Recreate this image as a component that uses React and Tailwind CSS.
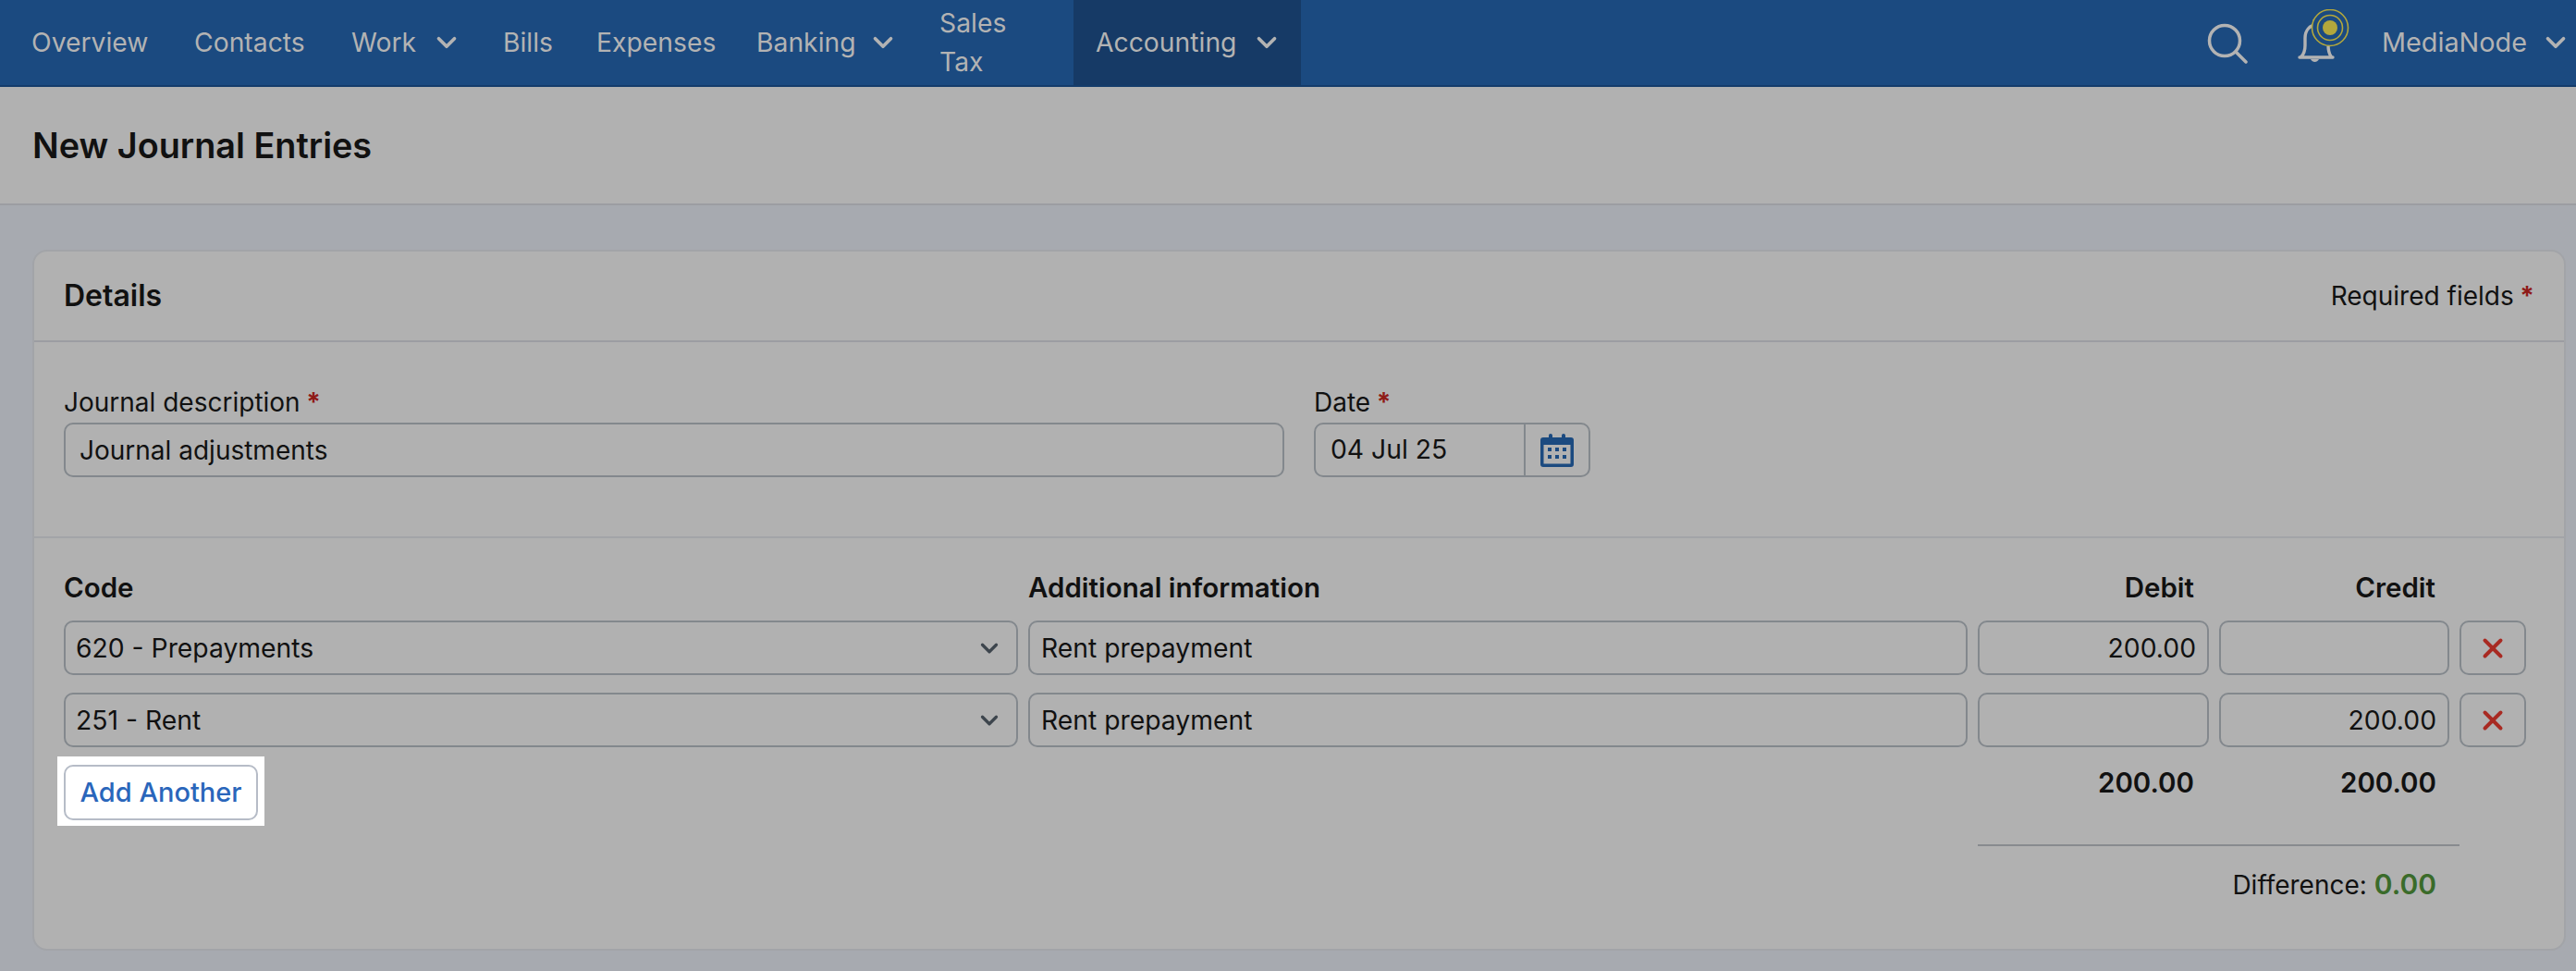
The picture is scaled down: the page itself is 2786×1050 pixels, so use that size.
import React from 'react';
import { ChevronDown, X } from 'lucide-react';

const navItems = [
  { label: 'Overview', width: 'w-[176px]' },
  { label: 'Contacts', width: 'w-[170px]' },
  { label: 'Work', width: 'w-[164px]', menu: true },
  { label: 'Bills', width: 'w-[101px]' },
  { label: 'Expenses', width: 'w-[173px]' },
  { label: 'Banking', width: 'w-[198px]', menu: true },
  { label: 'Sales Tax', width: 'w-[169px]' },
  { label: 'Accounting', width: 'w-[246px]', menu: true, active: true },
];

const rows = [
  { code: '620 - Prepayments', info: 'Rent prepayment', debit: '200.00', credit: '' },
  { code: '251 - Rent', info: 'Rent prepayment', debit: '', credit: '200.00' },
];

const field = 'h-[59px] border-2 border-[#83888d] rounded-[10px] flex items-center';
const tableCols = 'grid grid-cols-[1032px_1016px_250px_249px_72px] gap-x-[11px]';

const SearchIcon = () => (
  <svg width="44" height="44" viewBox="0 0 44 44" fill="none" stroke="#b3b3b3" strokeWidth="3.5" strokeLinecap="round">
    <circle cx="19" cy="19" r="16.5" />
    <path d="M31 31l11 11" />
  </svg>
);

// Notification bell with the yellow "ping" rings over its top right corner
const Bell = () => (
  <svg width="60" height="60" viewBox="0 0 60 60" fill="none">
    <path d="M5 52h36M7 51c3-3 4-6 4-12v-8c0-8 5-14 12-14s13 6 13 14v8c0 6 1 9 3 12M21 12v5" stroke="#b3b3b3" strokeWidth="3.4" strokeLinecap="round" />
    <path d="M17 54c2 4 7 4 9 0z" fill="#b3b3b3" />
    <circle cx="38" cy="20" r="20" fill="#1b4a80" />
    <circle cx="38" cy="20" r="8" fill="#b3a73c" />
    <circle cx="38" cy="20" r="13.5" stroke="#b3a73c" strokeWidth="1.6" />
    <circle cx="38" cy="20" r="19.5" stroke="#b3a73c" strokeWidth="1.6" />
  </svg>
);

const CalendarIcon = () => (
  <svg width="36" height="36" viewBox="0 0 36 36" fill="#1b4a80">
    <path fillRule="evenodd" d="M3 4h30a3 3 0 0 1 3 3v26a3 3 0 0 1-3 3H3a3 3 0 0 1-3-3V7a3 3 0 0 1 3-3zm.5 8v20.5h29V12z" />
    <rect x="9" y="0" width="4" height="10" rx="2" />
    <rect x="23" y="0" width="4" height="10" rx="2" />
    <rect x="8" y="15" width="4" height="4" />
    <rect x="16" y="15" width="4" height="4" />
    <rect x="24" y="15" width="4" height="4" />
    <rect x="8" y="23" width="4" height="4" />
    <rect x="16" y="23" width="4" height="4" />
    <rect x="24" y="23" width="4" height="4" />
  </svg>
);

const Required = () => <span className="text-[#8f1a17] font-bold"> *</span>;

export default function App() {
  return (
    <div className="min-h-[1050px] bg-[#a7aab0] font-[Inter,sans-serif] text-[28px] text-[#111111] overflow-hidden">
      {/* Top nav */}
      <nav className="h-[94px] bg-[#1b4a80] border-b-2 border-[#143c6b] flex items-stretch justify-between text-[#b3b3b3] pl-[10px] pr-[5px]">
        <ul className="flex text-[28.3px]">
          {navItems.map((item) => (
            <li key={item.label} className={`flex items-center justify-between pl-[24px] pr-[20px] ${item.width} ${item.active ? 'bg-[#163a66]' : ''}`}>
              {item.label}
              {item.menu && <ChevronDown size={34} strokeWidth={2.6} />}
            </li>
          ))}
        </ul>
        <div className="flex items-center text-[28.8px]">
          <div className="mr-[51px] pt-[2px]"><SearchIcon /></div>
          <div className="self-start pt-[10px]"><Bell /></div>
          <span className="ml-[34px]">MediaNode</span>
          <ChevronDown size={34} strokeWidth={2.6} className="ml-[14px]" />
        </div>
      </nav>

      {/* Page title */}
      <header className="h-[128px] bg-[#b1b1b1] border-b-2 border-[#9c9da2] flex items-center pl-[35px]">
        <h1 className="text-[37.8px] font-semibold">New Journal Entries</h1>
      </header>

      {/* Details card */}
      <section className="mt-[48px] ml-[35px] mr-[11px] h-[758px] bg-[#b1b1b1] border-2 border-[#a2a4a8] rounded-[16px]">
        <div className="h-[98px] border-b-2 border-[#9c9da2] flex items-center justify-between pl-[32px] pr-[32px]">
          <h2 className="text-[32px] font-semibold">Details</h2>
          <p>Required fields<Required /></p>
        </div>

        <div className="h-[212px] border-b-2 border-[#a2a4a8] flex gap-[32px] pl-[32px] pt-[50px]">
          <label className="w-[1320px]">
            <span className="block h-[37px] leading-[31px]">Journal description<Required /></span>
            <div className={`${field} pl-[15px] pt-[1px]`}>Journal adjustments</div>
          </label>
          <label className="w-[299px]">
            <span className="block h-[37px] leading-[31px]">Date<Required /></span>
            <div className={`${field} justify-between text-[28.3px]`}>
              <span className="pl-[16px]">04 Jul 25</span>
              <span className="h-full w-[70px] border-l-2 border-[#83888d] flex items-center justify-center">
                <CalendarIcon />
              </span>
            </div>
          </label>
        </div>

        <div className="pl-[32px] pt-[31px]">
          <div className={`${tableCols} text-[29.5px] font-semibold h-[58px]`}>
            <span>Code</span>
            <span>Additional information</span>
            <span className="text-right pr-[16px]">Debit</span>
            <span className="text-right pr-[15px]">Credit</span>
          </div>

          <div className="flex flex-col gap-[19px] text-[28.3px]">
            {rows.map((row) => (
              <div key={row.code} className={tableCols}>
                <div className={`${field} justify-between pl-[11px] pr-[14px]`}>
                  <span className="pt-[2px]">{row.code}</span>
                  <ChevronDown size={30} strokeWidth={2.6} className="text-[#3d454d]" />
                </div>
                <div className={`${field} px-[12px] pt-[2px]`}>{row.info}</div>
                <div className={`${field} justify-end px-[12px] pt-[2px]`}>{row.debit}</div>
                <div className={`${field} justify-end px-[12px] pt-[2px]`}>{row.credit}</div>
                <button className={`${field} justify-center`}>
                  <X size={34} strokeWidth={2.8} className="text-[#a82a22]" />
                </button>
              </div>
            ))}
          </div>

          <div className="flex justify-between mt-[10px]">
            <div className="-ml-[7px] bg-white px-[7px] pt-[9px] pb-[6px] self-start">
              <button className="h-[60px] w-[210px] bg-white border-2 border-[#b6bcc7] rounded-[10px] text-[29px] text-[#2a66bb] font-medium">
                Add Another
              </button>
            </div>
            <div className="w-[521px] mr-[113px]">
              <div className="grid grid-cols-[250px_271px] text-right text-[29.5px] font-semibold pt-[6px] h-[97px] border-b-2 border-[#888b8f]">
                <span className="pr-[16px]">200.00</span>
                <span className="pr-[25px]">200.00</span>
              </div>
              <p className="text-right pr-[25px] mt-[19px]">
                Difference: <span className="text-[30px] text-[#3a6b2a] font-semibold">0.00</span>
              </p>
            </div>
          </div>
        </div>
      </section>
    </div>
  );
}
